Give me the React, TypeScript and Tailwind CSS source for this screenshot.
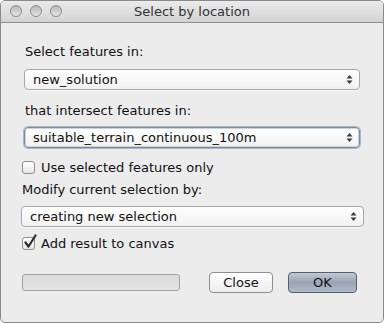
const font = { fontFamily: '"DejaVu Sans", "Liberation Sans", sans-serif' };

function Arrows() {
  return (
    <svg width="7" height="11" viewBox="0 0 7 11" className="shrink-0">
      <path d="M3.5 1 L6.5 4.5 L0.5 4.5 Z" fill="#3a3a3a" />
      <path d="M3.5 10 L6.5 6.5 L0.5 6.5 Z" fill="#3a3a3a" />
    </svg>
  );
}

function Combo({ label, focused, className }: { label: string; focused?: boolean; className: string }) {
  return (
    <div
      className={`flex h-[21px] items-center justify-between rounded-[4px] border bg-gradient-to-b from-white to-[#f1f1f1] pr-[6px] pl-[8px] text-[13px] text-[#111] ${
        focused
          ? "border-[#7d8a99] shadow-[0_0_0_1px_#a9b6c5,inset_0_0_0_1px_#c9d3de]"
          : "border-[#a8a8a8] shadow-[0_1px_0_rgba(255,255,255,0.7)]"
      } ${className}`}
    >
      <span className="leading-none">{label}</span>
      <Arrows />
    </div>
  );
}

function Checkbox({ checked, label, className }: { checked?: boolean; label: string; className: string }) {
  return (
    <div className={`flex items-center text-[13px] text-[#111] ${className}`}>
      <div className="relative mr-[6px] h-[13px] w-[13px] rounded-[3px] border border-[#8e8e8e] bg-gradient-to-b from-white to-[#e6e6e6]">
        {checked && (
          <svg width="16" height="16" viewBox="0 0 16 16" className="absolute -top-[4px] left-[0px]">
            <path d="M2.5 8.5 L5.5 12.5 L12.5 1.5" fill="none" stroke="#2a2a2a" strokeWidth="2.2" strokeLinecap="round" strokeLinejoin="round" />
          </svg>
        )}
      </div>
      <span className="leading-none">{label}</span>
    </div>
  );
}

export default function App() {
  return (
    <div style={font} className="h-[324px] w-[385px] bg-white">
      <div className="flex h-[323px] w-[384px] flex-col overflow-hidden rounded-[5px] border border-[#8a8a8a] bg-[#ececec]">
        {/* barre de titre */}
        <div className="relative flex h-[22px] shrink-0 items-center justify-center border-b border-[#8f8f8f] bg-gradient-to-b from-[#ebebeb] to-[#d3d3d3]">
          <div className="absolute top-[4px] left-[9px] flex gap-[8px]">
            {[0, 1, 2].map((i) => (
              <div
                key={i}
                className="h-[12px] w-[12px] rounded-full border border-[#8c8c8c] bg-gradient-to-b from-[#b8b8b8] to-[#e4e4e4]"
              />
            ))}
          </div>
          <span className="text-[13px] text-[#333]">Select by location</span>
        </div>

        <div className="flex flex-col">
          <div className="mt-[21px] ml-[24px] text-[13px] leading-[16px] text-[#111]">Select features in:</div>
          <Combo label="new_solution" className="mt-[9px] ml-[23px] w-[336px]" />
          <div className="mt-[13px] ml-[24px] text-[13px] leading-[16px] text-[#111]">that intersect features in:</div>
          <Combo label="suitable_terrain_continuous_100m" focused className="mt-[8px] ml-[23px] w-[336px]" />
          <Checkbox label="Use selected features only" className="mt-[13px] ml-[21px]" />
          <div className="mt-[8px] ml-[21px] text-[13px] leading-[16px] text-[#111]">Modify current selection by:</div>
          <Combo label="creating new selection" className="mt-[8px] ml-[20px] w-[343px]" />
          <Checkbox checked label="Add result to canvas" className="mt-[10px] ml-[21px]" />

          <div className="mt-[22px] flex items-center">
            <div className="ml-[21px] h-[17px] w-[158px] rounded-[3px] border border-[#a0a0a0] bg-gradient-to-b from-[#dcdcdc] to-[#e4e4e4]" />
            <button className="ml-[29px] h-[21px] w-[64px] rounded-[4px] border border-[#8e8e8e] bg-gradient-to-b from-white to-[#ececec] text-[13px] text-[#111]">
              Close
            </button>
            <button className="ml-[15px] h-[21px] w-[69px] rounded-[4px] border border-[#55606e] bg-gradient-to-b from-[#c3cad5] via-[#9aa4b3] to-[#b2bac6] text-[13px] text-[#111]">
              OK
            </button>
          </div>
        </div>
      </div>
    </div>
  );
}
